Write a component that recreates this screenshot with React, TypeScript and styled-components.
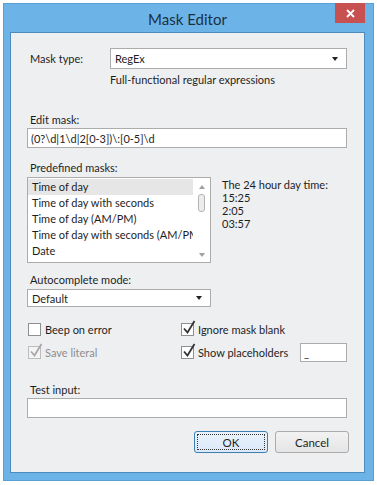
import styled, { createGlobalStyle } from "styled-components";

const GlobalStyle = createGlobalStyle`
  html, body {
    margin: 0;
    padding: 0;
    background: #ffffff;
  }
  body {
    font-family: Lato, "Liberation Sans", sans-serif;
    font-size: 11px;
    color: #1e1e1e;
  }
`;

const Page = styled.div`
  padding: 3px 0 0 3px;
`;

const Window = styled.div`
  width: 371px;
  height: 478px;
  box-sizing: border-box;
  background: #6cb4e8;
  border: 1px solid #5a9fd2;
  display: flex;
  flex-direction: column;
  padding: 0 8px 7px 6px;
`;

const TitleBar = styled.div`
  height: 28px;
  flex-shrink: 0;
  display: flex;
  align-items: center;
  justify-content: center;
  position: relative;
`;

const Title = styled.div`
  font-size: 15px;
  color: #1c2f42;
  margin-top: 1px;
`;

const CloseButton = styled.div`
  position: absolute;
  top: -1px;
  right: 0;
  width: 30px;
  height: 20px;
  background: #c75050;
  display: flex;
  align-items: center;
  justify-content: center;
`;

const Client = styled.div`
  flex: 1;
  background: #eeeff1;
  border: 1px solid #4d8bbd;
  display: flex;
  flex-direction: column;
  padding: 15px 17px 0 16px;
`;

const Row = styled.div<{ $top?: number }>`
  display: flex;
  align-items: flex-start;
  margin-top: ${(p) => p.$top ?? 0}px;
`;

const Label = styled.div<{ $top?: number; $width?: number; $muted?: boolean }>`
  line-height: 16px;
  height: 16px;
  padding-left: 3px;
  margin-top: ${(p) => p.$top ?? 0}px;
  width: ${(p) => (p.$width ? `${p.$width}px` : "auto")};
  flex-shrink: 0;
  color: ${(p) => (p.$muted ? "#8d8d8d" : "#1e1e1e")};
  white-space: nowrap;
`;

const Hint = styled(Label)`
  padding-left: 83px;
`;

const Combo = styled.div<{ $width?: number; $height: number }>`
  box-sizing: border-box;
  width: ${(p) => (p.$width ? `${p.$width}px` : "auto")};
  flex: ${(p) => (p.$width ? "none" : "1")};
  height: ${(p) => p.$height}px;
  background: #ffffff;
  border: 1px solid #acacac;
  display: flex;
  align-items: center;
  padding: 0 8px 0 4px;
`;

const ComboText = styled.div`
  flex: 1;
`;

const Arrow = styled.div`
  width: 0;
  height: 0;
  border-left: 3.5px solid transparent;
  border-right: 3.5px solid transparent;
  border-top: 4px solid #222;
`;

const TextBox = styled.div<{ $height: number; $width?: number }>`
  box-sizing: border-box;
  height: ${(p) => p.$height}px;
  width: ${(p) => (p.$width ? `${p.$width}px` : "100%")};
  margin-left: auto;
  background: #ffffff;
  border: 1px solid #acacac;
  display: flex;
  align-items: center;
  padding: 0 3px;
  white-space: nowrap;
`;

const ListArea = styled.div`
  display: flex;
  margin-top: 1px;
`;

const ListBox = styled.div`
  box-sizing: border-box;
  width: 184px;
  height: 86px;
  background: #ffffff;
  border: 1px solid #acacac;
  display: flex;
  overflow: hidden;
`;

const Items = styled.div`
  flex: 1;
  overflow: hidden;
  padding-top: 1px;
`;

const Item = styled.div<{ $selected?: boolean }>`
  height: 16px;
  line-height: 16px;
  padding-left: 4px;
  white-space: nowrap;
  overflow: hidden;
  background: ${(p) => (p.$selected ? "#e6e6e6" : "transparent")};
`;

const ScrollBar = styled.div`
  width: 17px;
  flex-shrink: 0;
  display: flex;
  flex-direction: column;
  align-items: center;
  background: #ffffff;
`;

const ScrollArrow = styled.div<{ $up?: boolean }>`
  width: 0;
  height: 0;
  margin: 7px 0 5px;
  border-left: 3.5px solid transparent;
  border-right: 3.5px solid transparent;
  ${(p) => (p.$up ? "border-bottom: 4px solid #a0a0a0;" : "border-top: 4px solid #a0a0a0;")}
`;

const Thumb = styled.div`
  width: 5px;
  height: 16px;
  border: 1px solid #b4b4b4;
  border-radius: 3px;
  background: #ececec;
`;

const ScrollSpacer = styled.div`
  flex: 1;
`;

const Sample = styled.div`
  padding-left: 11px;
  padding-top: 1px;
`;

const SampleLine = styled.div`
  line-height: 13px;
  height: 13px;
  white-space: nowrap;
`;

const CheckRow = styled.div<{ $top?: number }>`
  display: flex;
  align-items: center;
  height: 20px;
  margin-top: ${(p) => p.$top ?? 0}px;
`;

const CheckCell = styled.div<{ $width: number }>`
  width: ${(p) => p.$width}px;
  display: flex;
  align-items: center;
  flex-shrink: 0;
`;

const Box = styled.div<{ $disabled?: boolean }>`
  box-sizing: border-box;
  width: 13px;
  height: 13px;
  margin-left: 1px;
  border: 1px solid ${(p) => (p.$disabled ? "#bcbcbc" : "#8f8f8f")};
  background: ${(p) => (p.$disabled ? "#f4f4f4" : "#ffffff")};
  position: relative;
`;

const Tick = styled.svg`
  position: absolute;
  left: 1px;
  top: -4px;
`;

const CheckLabel = styled.span<{ $muted?: boolean }>`
  margin-left: 4px;
  color: ${(p) => (p.$muted ? "#8d8d8d" : "#1e1e1e")};
  white-space: nowrap;
`;

const Buttons = styled.div`
  display: flex;
  justify-content: flex-end;
  gap: 7px;
  margin-top: 13px;
  margin-right: -2px;
`;

const Button = styled.div<{ $default?: boolean }>`
  box-sizing: border-box;
  width: 74px;
  height: 22px;
  border-radius: 3px;
  border: 1px solid ${(p) => (p.$default ? "#3c7fb1" : "#acacac")};
  background: ${(p) =>
    p.$default
      ? "linear-gradient(#eaf3fc, #dce9f9)"
      : "linear-gradient(#f2f2f2, #e5e5e5)"};
  display: flex;
  align-items: center;
  justify-content: center;
  padding: 2px;
  font-size: 11.5px;
`;

const Focus = styled.div`
  flex: 1;
  align-self: stretch;
  border: 1px dotted #333;
  display: flex;
  align-items: center;
  justify-content: center;
`;

type CheckProps = { label: string; checked?: boolean; disabled?: boolean };

const Check = ({ label, checked, disabled }: CheckProps) => (
  <>
    <Box $disabled={disabled}>
      {checked && (
        <Tick width="13" height="14" viewBox="0 0 13 14">
          <path
            d="M1 8.5 L4.5 12.5 L11.5 1"
            fill="none"
            stroke={disabled ? "#a8a8a8" : "#333"}
            strokeWidth="1.8"
          />
        </Tick>
      )}
    </Box>
    <CheckLabel $muted={disabled}>{label}</CheckLabel>
  </>
);

const items = [
  "Time of day",
  "Time of day with seconds",
  "Time of day (AM/PM)",
  "Time of day with seconds (AM/PM)",
  "Date",
  "Telephone number",
];

const sample = ["The 24 hour day time:", "15:25", "2:05", "03:57"];

const App = () => {
  return (
    <Page>
      <GlobalStyle />
      <Window>
        <TitleBar>
          <Title>Mask Editor</Title>
          <CloseButton>
            <svg width="9" height="9" viewBox="0 0 9 9">
              <path d="M1 1 L8 8 M8 1 L1 8" stroke="#fff" strokeWidth="1.8" />
            </svg>
          </CloseButton>
        </TitleBar>
        <Client>
          <Row>
            <Label $width={80} $top={3}>
              Mask type:
            </Label>
            <Combo $height={21}>
              <ComboText>RegEx</ComboText>
              <Arrow />
            </Combo>
          </Row>
          <Hint $top={3}>Full-functional regular expressions</Hint>

          <Label $top={24}>Edit mask:</Label>
          <TextBox $height={20}>(0?\d|1\d|2[0-3])\:[0-5]\d</TextBox>

          <Label $top={12}>Predefined masks:</Label>
          <ListArea>
            <ListBox>
              <Items>
                {items.map((it, i) => (
                  <Item key={it} $selected={i === 0}>
                    {it}
                  </Item>
                ))}
              </Items>
              <ScrollBar>
                <ScrollArrow $up />
                <Thumb />
                <ScrollSpacer />
                <ScrollArrow />
              </ScrollBar>
            </ListBox>
            <Sample>
              {sample.map((s) => (
                <SampleLine key={s}>{s}</SampleLine>
              ))}
            </Sample>
          </ListArea>

          <Label $top={9}>Autocomplete mode:</Label>
          <Row $top={1}>
            <Combo $width={184} $height={18}>
              <ComboText>Default</ComboText>
              <Arrow />
            </Combo>
          </Row>

          <CheckRow $top={12}>
            <CheckCell $width={153}>
              <Check label="Beep on error" />
            </CheckCell>
            <CheckCell $width={120}>
              <Check label="Ignore mask blank" checked />
            </CheckCell>
          </CheckRow>
          <CheckRow $top={3}>
            <CheckCell $width={153}>
              <Check label="Save literal" checked disabled />
            </CheckCell>
            <CheckCell $width={120}>
              <Check label="Show placeholders" checked />
            </CheckCell>
            <TextBox $height={19} $width={47}>
              _
            </TextBox>
          </CheckRow>

          <Label $top={20}>Test input:</Label>
          <TextBox $height={20} />

          <Buttons>
            <Button $default>
              <Focus>OK</Focus>
            </Button>
            <Button>Cancel</Button>
          </Buttons>
        </Client>
      </Window>
    </Page>
  );
};

export default App;
